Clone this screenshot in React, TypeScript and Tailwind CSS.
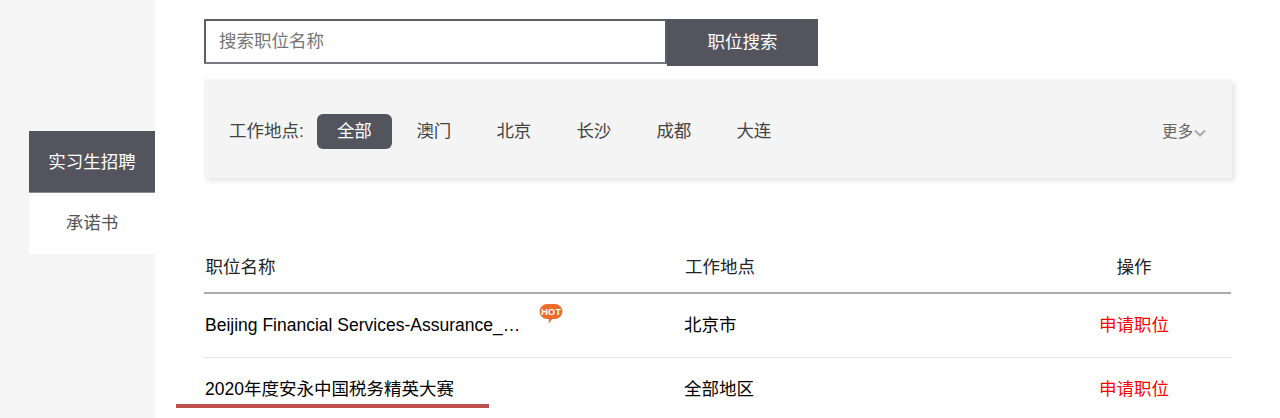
const font = "[font-family:'Liberation_Sans','Noto_Sans_CJK_SC',sans-serif]";

const cities = ["澳门", "北京", "长沙", "成都", "大连"];

const jobs = [
  { name: "Beijing Financial Services-Assurance_…", place: "北京市", hot: true },
  { name: "2020年度安永中国税务精英大赛", place: "全部地区", hot: false },
];

function HotBadge() {
  return (
    <svg width="24" height="21" viewBox="0 0 24 21" className="absolute left-[335px] top-[9px]">
      <path d="M8 1h8a7.500 7.500 0 0 1 7.500 7.500v0a7.500 7.500 0 0 1-7.500 7.500h-2.500l-4 4.500.5-4.500H8a7.500 7.500 0 0 1-7.500-7.500v0A7.500 7.500 0 0 1 8 1z" fill="#ec6c2c" />
      <text x="12" y="12" textAnchor="middle" fontSize="9.500" fontWeight="700" fill="#fff" fontFamily="Liberation Sans">
        HOT
      </text>
    </svg>
  );
}

export default function App() {
  return (
    <div className={`flex h-[418px] w-[1280px] overflow-hidden bg-white ${font}`}>
      <div className="h-full w-[155px] shrink-0 bg-[#f5f5f5] pl-[29px] pt-[131px]">
        <div className="flex h-[62px] items-center justify-center border-b border-[#8b8c96] bg-[#53545e] pt-[1px] text-[17.500px] text-white">
          实习生招聘
        </div>
        <div className="flex h-[61px] items-center justify-center bg-white text-[17.500px] text-[#555]">承诺书</div>
      </div>

      <div className="w-[1125px] pl-[49px] pr-[48px] pt-[19px]">
        <div className="flex items-start">
          <div className="flex h-[45px] w-[463px] items-center border-2 border-[#5c5d67] border-b-[#777882] pl-[13px] text-[17.500px] text-[#757575]">
            搜索职位名称
          </div>
          <div className="flex h-[47px] w-[151px] items-center justify-center bg-[#53545e] text-[17.500px] text-white">
            职位搜索
          </div>
        </div>

        <div className="mt-[13px] flex h-[99px] items-center bg-[#f4f4f4] pl-[25px] pr-[26px] pt-[6px] shadow-[3px_3px_5px_rgba(0,0,0,0.1)]">
          <span className="text-[17.500px] text-[#444]">工作地点:</span>
          <span className="ml-[13px] flex h-[35px] w-[75px] items-center justify-center rounded-[6px] bg-[#53545e] text-[17.500px] text-white">
            全部
          </span>
          <div className="ml-[2px] flex">
            {cities.map((city) => (
              <span key={city} className="flex w-[80px] justify-center text-[17.500px] text-[#444]">
                {city}
              </span>
            ))}
          </div>
          <div className="ml-auto flex items-center text-[15.500px] text-[#666]">
            更多
            <svg width="12" height="8" viewBox="0 0 12 8" className="mt-[3px] ml-[1px]" fill="none" stroke="#aaa" strokeWidth="2">
              <path d="M1 1.500l5 5 5-5" />
            </svg>
          </div>
        </div>

        <div className="mt-[64px] w-[1027px] text-[17.500px] text-black">
          <div className="flex h-[52px] items-center border-b-2 border-[#a9a9ae]">
            <span className="w-[480px] pl-[1.500px] text-[#222]">职位名称</span>
            <span className="w-[398px] pl-[1px] text-[#222]">工作地点</span>
            <span className="w-[104px] text-center text-[#222]">操作</span>
          </div>
          {jobs.map((job, i) => (
            <div key={job.name} className={`relative flex h-[64px] items-center ${i === 0 ? "border-b border-[#e5e5e5]" : "pb-[1px]"}`}>
              <span className="w-[480px] pl-[1px] leading-none">{job.name}</span>
              {job.hot && <HotBadge />}
              <span className="w-[415px]">{job.place}</span>
              <span className="text-[#f00]">申请职位</span>
            </div>
          ))}
        </div>
      </div>

      <div className="absolute left-[176px] top-[404px] h-[4px] w-[313px] bg-[#c0504d]" />
    </div>
  );
}
